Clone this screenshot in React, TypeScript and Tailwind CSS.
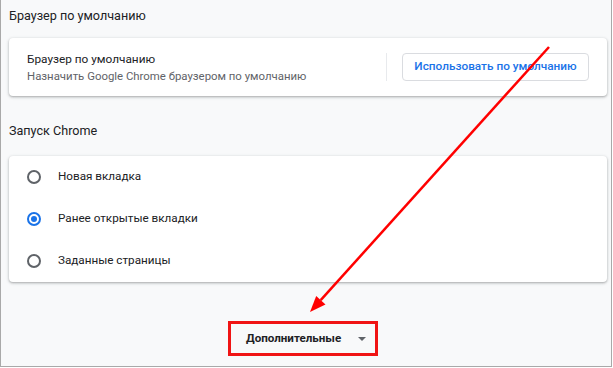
import React from "react";

function Radio({ checked }: { checked?: boolean }) {
  return checked ? (
    <span className="w-[14px] h-[14px] rounded-full border-2 border-[#1a73e8] flex items-center justify-center shrink-0">
      <span className="w-[6px] h-[6px] rounded-full bg-[#1a73e8]" />
    </span>
  ) : (
    <span className="w-[14px] h-[14px] rounded-full border-2 border-[#5f6368] shrink-0" />
  );
}

const options = [
  { label: "Новая вкладка", checked: false },
  { label: "Ранее открытые вкладки", checked: true },
  { label: "Заданные страницы", checked: false },
];

export default function App() {
  return (
    <div
      className="relative w-[612px] h-[367px] bg-[#f8f9fa] border-l border-r border-b border-[#a9a9a9] overflow-hidden text-[#202124]"
      style={{ fontFamily: "Roboto, 'Noto Sans', sans-serif" }}
    >
      <div className="pl-[8px] pr-[4px] pt-[6px]">
        <h2 className="text-[12.6px] leading-5">Браузер по умолчанию</h2>

        <div className="mt-[12px] h-[58px] bg-white rounded-[4px] shadow-[0_1px_2px_rgba(60,64,67,0.3),0_1px_3px_1px_rgba(60,64,67,0.12)] flex items-center pl-[18px] pr-[18px]">
          <div className="flex-1">
            <div className="text-[11.8px] leading-[18px]">Браузер по умолчанию</div>
            <div className="text-[11.4px] leading-[17px] text-[#5f6368]">
              Назначить Google Chrome браузером по умолчанию
            </div>
          </div>
          <div className="w-px h-[28px] bg-[#e8eaed] mr-[15px]" />
          <button className="h-[28px] w-[187px] rounded-[4px] border border-[#dadce0] bg-white text-[#1a73e8] text-[11.8px] font-medium">
            Использовать по умолчанию
          </button>
        </div>

        <h2 className="mt-[25px] text-[12.6px] leading-5">Запуск Chrome</h2>

        <div className="mt-[15px] bg-white rounded-[4px] shadow-[0_1px_2px_rgba(60,64,67,0.3),0_1px_3px_1px_rgba(60,64,67,0.12)]">
          {options.map((o) => (
            <div key={o.label} className="h-[42px] flex items-center pl-[18px] gap-[17px]">
              <Radio checked={o.checked} />
              <span className="text-[11.7px]">{o.label}</span>
            </div>
          ))}
        </div>

        <div className="mt-[39px] flex justify-center pr-[2px]">
          <button className="ml-[-8px] w-[150px] h-[35px] border-[3px] border-[#f01414] flex items-center pl-[15px] gap-[17px]">
            <span className="text-[11.6px] font-bold text-[#202124]">Дополнительные</span>
            <span className="w-0 h-0 border-l-[4px] border-r-[4px] border-t-[4px] border-l-transparent border-r-transparent border-t-[#5f6368]" />
          </button>
        </div>
      </div>

      <svg className="absolute inset-0 pointer-events-none" width="613" height="368">
        <line x1="548" y1="47" x2="319.7" y2="300.1" stroke="#ff0000" strokeWidth="2.5" />
        <polygon points="309,312 324.5,304.4 315.2,296" fill="#ff0000" />
      </svg>
    </div>
  );
}
